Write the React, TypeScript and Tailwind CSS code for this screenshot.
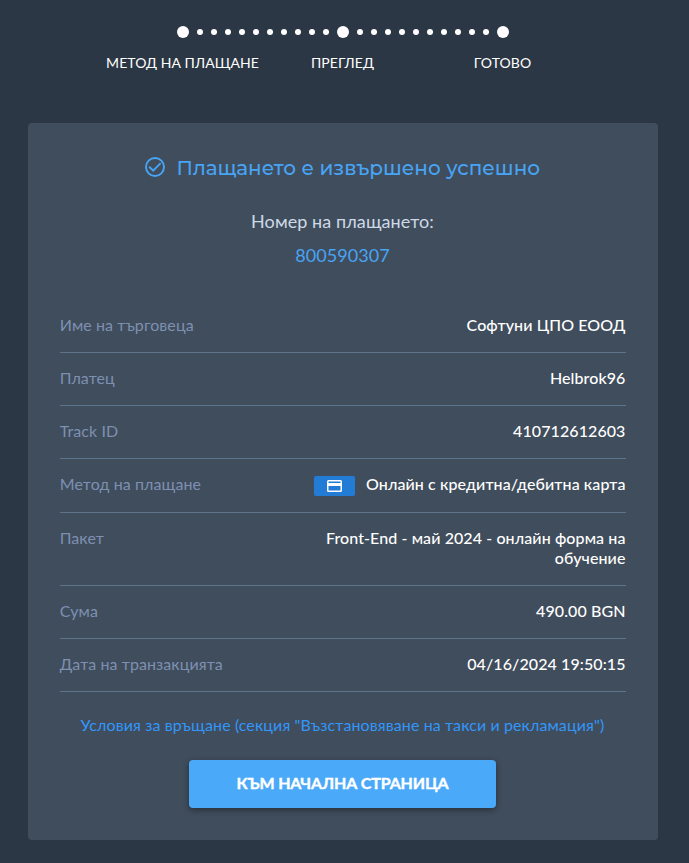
import { Fragment, type ReactNode } from 'react';

const steps = ['МЕТОД НА ПЛАЩАНЕ', 'ПРЕГЛЕД', 'ГОТОВО'];

function StepDots() {
  return (
    <div className="flex h-3 items-center justify-center gap-2">
      {steps.map((step, i) => (
        <Fragment key={step}>
          <span className="size-3 rounded-full bg-white" />
          {i < steps.length - 1 &&
            Array.from({ length: 10 }, (_, n) => <span key={n} className="size-1.5 rounded-full bg-white" />)}
        </Fragment>
      ))}
    </div>
  );
}

function Row({ label, tall, children }: { label: string; tall?: boolean; children: ReactNode }) {
  return (
    <div
      className={`flex justify-between border-b border-[#5d748d] pt-[15px] text-base leading-5 ${tall ? 'pb-[18px]' : 'pb-[17px]'}`}
    >
      <span className="-ml-[0.3px] tracking-[0.08px] text-[#7d90b2]">{label}</span>
      <div className="mr-[0.5px] flex max-w-[320px] justify-end text-right font-medium tracking-[0.09px] text-white">
        {children}
      </div>
    </div>
  );
}

function CardBadge() {
  return (
    <span className="mt-0.5 mr-[11px] -mb-0.5 flex h-5 w-[41px] items-center justify-center rounded-xs bg-[#227bd5]">
      <svg width="15" height="12" viewBox="0 0 15 12" fill="none">
        <rect x="0.75" y="0.75" width="13.5" height="10.5" rx="0.8" stroke="white" strokeWidth="1.5" />
        <path d="M0 4.5H15" stroke="white" strokeWidth="3" />
      </svg>
    </span>
  );
}

export default function App() {
  return (
    <div className="h-[863px] w-[689px] overflow-hidden bg-[#2c3745] pt-[26px] font-['Lato',sans-serif]">
      <div className="flex w-[686px] flex-col items-center">
        <StepDots />
        <div className="mt-[15px] mr-px grid w-[480px] grid-cols-3 text-center text-sm leading-5 tracking-[0.06px] whitespace-nowrap text-white">
          {steps.map((step) => (
            <span key={step}>{step}</span>
          ))}
        </div>
      </div>

      <main className="mt-[50px] ml-7 h-[717px] w-[630px] rounded bg-[#404d5c] pr-8 pl-8">
        <div className="mr-0.5 flex items-center justify-center gap-3 pt-[31px] text-[#48a4f5]">
          <svg className="-mt-0.5" width="20" height="20" viewBox="0 0 20 20" fill="none" stroke="currentColor" strokeWidth="1.9">
            <circle cx="10" cy="10" r="9" />
            <path d="M4.2 9.8L8.2 13.6L15.6 6.2" />
          </svg>
          <h1 className="h-7 w-[363px] font-['Montserrat','Inter',sans-serif] text-xl leading-7 font-medium whitespace-nowrap">
            Плащането е извършено успешно
          </h1>
        </div>
        <p className="mt-[25px] mr-px text-center text-lg leading-7 tracking-[0.08px] text-[#ced9e8]">Номер на плащането:</p>
        <p className="mt-1.5 mr-px text-center text-lg leading-7 tracking-[0.08px] text-[#48a4f5]">800590307</p>

        <section className="mt-[31px] w-[566px]">
          <Row label="Име на търговеца">Софтуни ЦПО ЕООД</Row>
          <Row label="Платец">Helbrok96</Row>
          <Row label="Track ID">410712612603</Row>
          <Row label="Метод на плащане" tall>
            <CardBadge />
            Онлайн с кредитна/дебитна карта
          </Row>
          <Row label="Пакет">Front-End - май 2024 - онлайн форма на обучение</Row>
          <Row label="Сума">490.00 BGN</Row>
          <Row label="Дата на транзакцията">04/16/2024 19:50:15</Row>
        </section>

        <a className="mt-[23px] mr-px block text-center text-base leading-5 tracking-[0.1px] whitespace-nowrap text-[#3296fa]">
          Условия за връщане (секция "Възстановяване на такси и рекламация")
        </a>
        <button className="mt-[25px] ml-[129px] block h-12 w-[307px] rounded bg-[#4aa9f8] pb-0.5 text-base font-bold tracking-[-0.15px] whitespace-nowrap text-white shadow-[0_2px_6px_rgba(0,0,0,0.4)] [-webkit-text-stroke:0.4px_white]">
          КЪМ НАЧАЛНА СТРАНИЦА
        </button>
      </main>
    </div>
  );
}
